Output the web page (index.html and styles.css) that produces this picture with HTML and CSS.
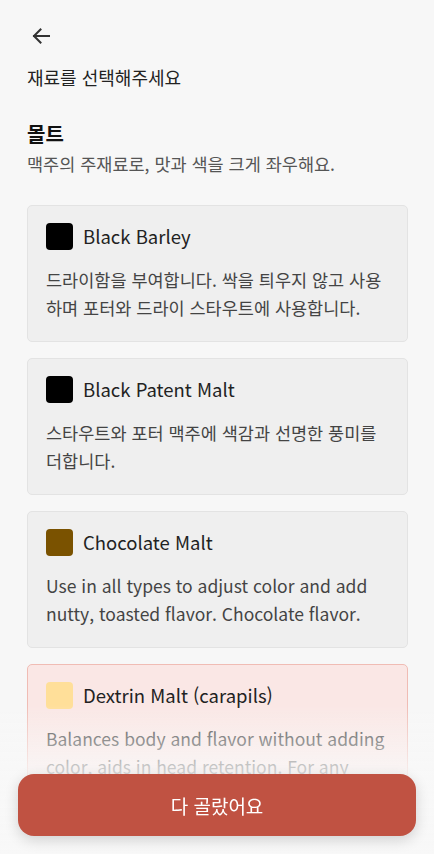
FILE: index.html
```html
<!DOCTYPE html>
<html lang="ko">
<head>
<meta charset="utf-8">
<link rel="stylesheet" href="styles.css">
</head>
<body>
<header class="top">
  <button class="back" aria-label="뒤로">
    <svg width="24" height="24" viewBox="0 0 24 24"><path d="M20 12H5M11.5 5.5L5 12l6.5 6.5" fill="none" stroke="#333" stroke-width="2" stroke-linecap="square"/></svg>
  </button>
</header>
<main class="page">
  <p class="prompt">재료를 선택해주세요</p>
  <h2 class="section-title">몰트</h2>
  <p class="section-sub">맥주의 주재료로, 맛과 색을 크게 좌우해요.</p>
  <ul class="list">
    <li class="card">
      <div class="card-head"><span class="swatch" style="background:#000"></span><span class="name">Black Barley</span></div>
      <p class="desc">드라이함을 부여합니다. 싹을 틔우지 않고 사용하며 포터와 드라이 스타우트에 사용합니다.</p>
    </li>
    <li class="card">
      <div class="card-head"><span class="swatch" style="background:#000"></span><span class="name">Black Patent Malt</span></div>
      <p class="desc">스타우트와 포터 맥주에 색감과 선명한 풍미를 더합니다.</p>
    </li>
    <li class="card">
      <div class="card-head"><span class="swatch" style="background:#7a5200"></span><span class="name">Chocolate Malt</span></div>
      <p class="desc">Use in all types to adjust color and add nutty, toasted flavor. Chocolate flavor.</p>
    </li>
    <li class="card selected">
      <div class="card-head"><span class="swatch" style="background:#ffdf99"></span><span class="name">Dextrin Malt (carapils)</span></div>
      <p class="desc">Balances body and flavor without adding color, aids in head retention. For any beer style.</p>
    </li>
  </ul>
</main>
<div class="fade"></div>
<button class="done">다 골랐어요</button>
</body>
</html>
```
FILE: styles.css
```css
* { box-sizing: border-box; }
html, body { margin: 0; padding: 0; }
body {
  background: #f7f7f7;
  font-family: "Noto Sans CJK KR", "Noto Sans", sans-serif;
  color: #222;
  overflow: hidden;
  height: 854px;
}
.top {
  padding: 24px 0 0 29px;
  height: 48px;
}
.back {
  border: 0;
  background: none;
  padding: 0;
  width: 24px;
  height: 24px;
  display: block;
}
.back svg { display: block; }
.page {
  padding: 17px 26px 0 27px;
}
.prompt {
  margin: 0;
  font-size: 18px;
  line-height: 24px;
  color: #222;
}
.section-title {
  margin: 31px 0 0;
  font-size: 20px;
  line-height: 28px;
  font-weight: 700;
  color: #111;
}
.section-sub {
  margin: 3px 0 0;
  font-size: 17.5px;
  line-height: 26px;
  color: #555;
}
.list {
  list-style: none;
  margin: 28px 0 0;
  padding: 0;
  display: flex;
  flex-direction: column;
  gap: 16px;
}
.card {
  background: #efefef;
  border: 1px solid #e3e3e3;
  border-radius: 5px;
  padding: 17px 18px 19px;
}
.card.selected {
  background: #fae7e5;
  border-color: #f0bcb4;
}
.card-head {
  display: flex;
  align-items: center;
  gap: 10px;
  height: 27px;
}
.swatch {
  width: 27px;
  height: 27px;
  border-radius: 4px;
  flex: none;
}
.name {
  font-size: 18.5px;
  font-weight: 400;
  color: #222;
  line-height: 27px;
}
.desc {
  margin: 16px 0 0;
  font-size: 17.5px;
  line-height: 28px;
  color: #444;
}
.fade {
  position: fixed;
  left: 0;
  right: 0;
  bottom: 0;
  height: 150px;
  background: linear-gradient(to bottom, rgba(248,248,248,0) 0%, rgba(248,248,248,0.97) 55%, #f8f8f8 100%);
}
.done {
  position: fixed;
  left: 18px;
  right: 18px;
  bottom: 18px;
  height: 62px;
  border: 0;
  border-radius: 16px;
  background: #c05242;
  color: #fff;
  font-family: "Noto Sans CJK KR", "Noto Sans", sans-serif;
  font-size: 19px;
  font-weight: 400;
  box-shadow: 0 4px 14px rgba(0,0,0,0.16);
}
```
